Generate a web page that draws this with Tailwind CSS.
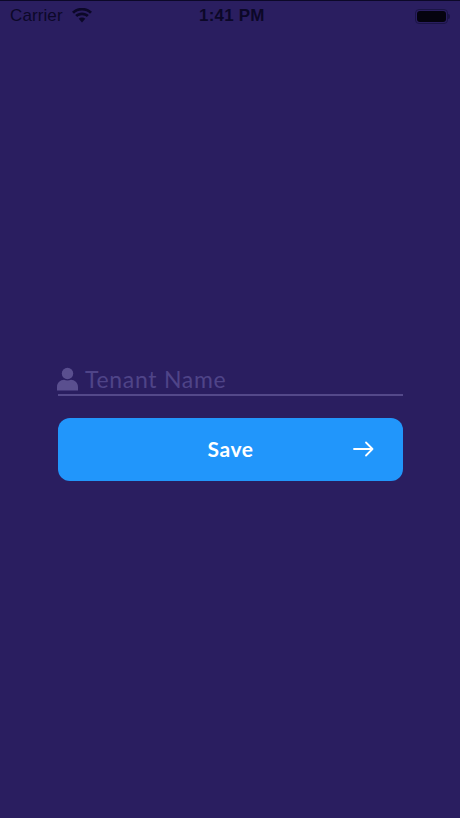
<!DOCTYPE html>
<html lang="en">
<head>
  <meta charset="UTF-8">
  <meta name="viewport" content="width=device-width, initial-scale=1.0">
  <title>Tenant</title>
  <script src="https://cdn.jsdelivr.net/npm/@tailwindcss/browser@4"></script>
</head>
<body class="overflow-hidden">
  <div class="w-[460px] h-[818px] bg-[#2a1e60] border-t border-[#0c0828] flex flex-col font-['Lato',sans-serif]">

    <!-- status bar -->
    <div class="h-[30px] relative flex items-center justify-between pl-[10px] pr-[10px] text-[#0c0828] font-['Liberation_Sans',sans-serif]">
      <div class="flex items-center gap-[9px]">
        <span class="text-[17px] tracking-[0.1px]">Carrier</span>
        <svg class="w-[20px] h-[15px] mt-[-1px]" viewBox="0 0 20 15" fill="#0c0828">
          <path d="M10 2.600c3.100 0 5.900 1.200 8 3.200l2-2C17.300 1.300 13.800-.2 10-.2S2.700 1.300 0 3.800l2 2c2.100-2 4.900-3.200 8-3.200z"/>
          <path d="M10 7.200c1.900 0 3.500.7 4.800 1.900l2-2C15 5.400 12.600 4.400 10 4.400s-5 1-6.800 2.700l2 2C6.500 7.900 8.100 7.200 10 7.200z"/>
          <path d="M10 9.400c-1.300 0-2.400.5-3.300 1.300L10 14.400l3.300-3.700c-.9-.8-2-1.300-3.300-1.300z"/>
        </svg>
      </div>
      <span class="absolute left-[199px] text-[17px] font-bold tracking-[0.2px]">1:41 PM</span>
      <div class="flex items-center">
        <div class="w-[33px] h-[15px] rounded-[4px] border border-[#1a1445] p-[1px]">
          <div class="w-full h-full rounded-[3px] bg-[#05030f]"></div>
        </div>
        <div class="w-[2px] h-[5px] rounded-r-sm bg-[#1a1445]"></div>
      </div>
    </div>

    <!-- form -->
    <div class="flex flex-col mt-[334px] mx-[58px] w-[345px]">
      <div class="flex items-center gap-[7px] h-[31px] border-b-2 border-[#54498a]">
        <svg class="w-[21px] h-[24px] shrink-0 ml-[-1px] mb-[1px]" viewBox="0 0 21 24" fill="#5a4f8f">
          <circle cx="10.500" cy="6.500" r="5.700"/>
          <path d="M0 23.500v-3.500c0-4.500 3.500-7 7-7.200 1 .5 2.200.8 3.500.8s2.500-.3 3.500-.8c3.500.2 7 2.700 7 7.200v3.500z"/>
        </svg>
        <span class="text-[23px] leading-none text-[#4f4488] tracking-[0.7px] mb-[1px]">Tenant Name</span>
      </div>
      <button class="mt-[22px] h-[63px] rounded-[12px] bg-[#2196fb] relative flex items-center justify-center text-white text-[21px] font-bold tracking-[0.5px] pb-[1px]">
        Save
        <svg class="absolute right-[29px] top-[23px] w-[21px] h-[16px]" viewBox="0 0 21 16" fill="none" stroke="#fff" stroke-width="1.800" stroke-linecap="round" stroke-linejoin="round">
          <path d="M1 8h18.500M13 1.500 19.500 8 13 14.500"/>
        </svg>
      </button>
    </div>
  </div>
</body>
</html>
